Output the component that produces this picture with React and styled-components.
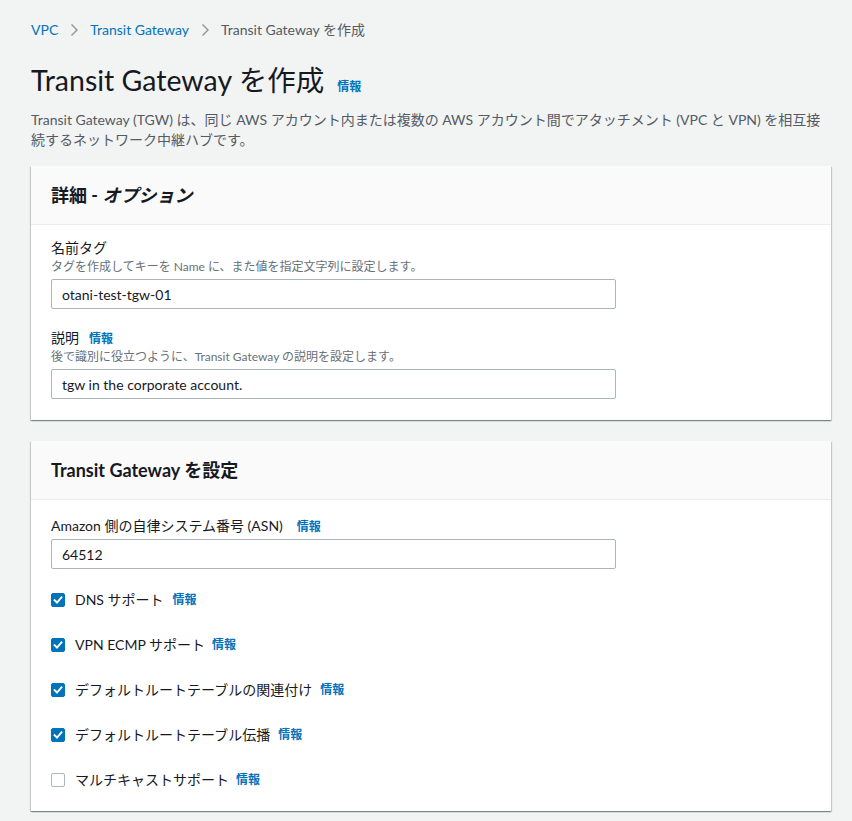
import React from "react";
import styled, { createGlobalStyle } from "styled-components";

const Global = createGlobalStyle`
  html, body { margin: 0; padding: 0; background: #f2f3f3; }
  body {
    font-family: Lato, "Noto Sans CJK JP", sans-serif;
    color: #16191f;
    -webkit-font-smoothing: antialiased;
  }
`;

const Page = styled.div`
  padding: 20px 21px 12px 31px;
  width: 800px;
`;

const Crumbs = styled.nav`
  display: flex;
  align-items: center;
  gap: 11px;
  font-size: 14px;
  line-height: 20px;
  height: 20px;
`;

const CrumbLink = styled.a`
  color: #0073bb;
  text-decoration: none;
`;

const CrumbCurrent = styled.span`
  color: #545b64;
`;

const Chevron = () => (
  <svg width="10" height="14" viewBox="0 0 10 14" fill="none">
    <path d="M2.5 1.5 L8 7 L2.5 12.5" stroke="#879596" strokeWidth="1.4" />
  </svg>
);

const TitleRow = styled.div`
  display: flex;
  align-items: baseline;
  gap: 13px;
  margin-top: 20px;
`;

const Title = styled.h1`
  margin: 0;
  font-size: 28.5px;
  line-height: 40px;
  font-weight: 400;
  color: #16191f;
`;

const Info = styled.a`
  color: #0073bb;
  font-size: 12px;
  font-weight: 700;
  text-decoration: none;
  line-height: 16px;
`;

const Lead = styled.p`
  margin: 10px 0 0;
  font-size: 14px;
  line-height: 20px;
  color: #545b64;
`;

const Card = styled.section`
  background: #fff;
  margin-top: ${(p) => p.$top}px;
  box-shadow: 0 1px 1px 0 rgba(0, 28, 36, 0.3),
    1px 1px 1px 0 rgba(0, 28, 36, 0.15),
    -1px 1px 1px 0 rgba(0, 28, 36, 0.15);
`;

const CardHeader = styled.header`
  background: #fafafa;
  border-bottom: 1px solid #eaeded;
  padding: 19px 20px;
`;

const CardTitle = styled.h2`
  margin: 0;
  font-size: 18px;
  line-height: 20px;
  font-weight: 700;
  color: #16191f;
  em { font-style: italic; }
`;

const CardBody = styled.div`
  padding: ${(p) => p.$pt}px 20px 21px;
  display: flex;
  flex-direction: column;
  gap: ${(p) => p.$gap}px;
`;

const Field = styled.div`
  display: flex;
  flex-direction: column;
`;

const Label = styled.div`
  display: flex;
  align-items: baseline;
  gap: ${(p) => p.$gap || 10}px;
  font-size: 14px;
  line-height: 20px;
  color: #16191f;
`;

const Desc = styled.div`
  margin-top: 1px;
  font-size: 12px;
  line-height: 16px;
  color: #687078;
`;

const Input = styled.input`
  box-sizing: border-box;
  width: 565px;
  height: 30px;
  margin-top: ${(p) => p.$mt}px;
  padding: 4px 10px;
  border: 1px solid #aab7b8;
  border-radius: 2px;
  font-family: inherit;
  font-size: 14px;
  color: #16191f;
  background: #fff;
  outline: none;
`;

const Checks = styled.div`
  display: flex;
  flex-direction: column;
  gap: 25px;
  margin-top: 21px;
`;

const CheckRow = styled.label`
  display: flex;
  align-items: center;
  height: 20px;
  font-size: 14px;
  line-height: 20px;
`;

const Box = styled.span`
  box-sizing: border-box;
  width: 14px;
  height: 14px;
  border-radius: 2px;
  margin-right: 10px;
  display: inline-flex;
  align-items: center;
  justify-content: center;
  background: ${(p) => (p.$on ? "#0073bb" : "#fff")};
  border: 1px solid ${(p) => (p.$on ? "#0073bb" : "#aab7b8")};
`;

const CheckText = styled.span`
  margin-right: ${(p) => p.$gap}px;
`;

const Tick = () => (
  <svg width="10" height="10" viewBox="0 0 10 10" fill="none">
    <path d="M1.6 5.2 L4 7.5 L8.5 2.3" stroke="#fff" strokeWidth="1.9" strokeLinecap="square" />
  </svg>
);

const checks = [
  { text: "DNS サポート", on: true, gap: 9 },
  { text: "VPN ECMP サポート", on: true, gap: 7 },
  { text: "デフォルトルートテーブルの関連付け", on: true, gap: 8 },
  { text: "デフォルトルートテーブル伝播", on: true, gap: 8 },
  { text: "マルチキャストサポート", on: false, gap: 7 },
];

export default function App() {
  return (
    <>
      <Global />
      <Page>
        <Crumbs>
          <CrumbLink href="#">VPC</CrumbLink>
          <Chevron />
          <CrumbLink href="#">Transit Gateway</CrumbLink>
          <Chevron />
          <CrumbCurrent>Transit Gateway を作成</CrumbCurrent>
        </Crumbs>
        <TitleRow>
          <Title>Transit Gateway を作成</Title>
          <Info href="#">情報</Info>
        </TitleRow>
        <Lead>
          Transit Gateway (TGW) は、同じ AWS アカウント内または複数の AWS アカウント間でアタッチメント (VPC と VPN) を相互接続するネットワーク中継ハブです。
        </Lead>

        <Card $top={16}>
          <CardHeader>
            <CardTitle>
              詳細 - <em>オプション</em>
            </CardTitle>
          </CardHeader>
          <CardBody $pt={13} $gap={19}>
            <Field>
              <Label>名前タグ</Label>
              <Desc>タグを作成してキーを Name に、また値を指定文字列に設定します。</Desc>
              <Input $mt={4} defaultValue="otani-test-tgw-01" />
            </Field>
            <Field>
              <Label>
                説明 <Info href="#">情報</Info>
              </Label>
              <Desc>後で識別に役立つように、Transit Gateway の説明を設定します。</Desc>
              <Input $mt={4} defaultValue="tgw in the corporate account." />
            </Field>
          </CardBody>
        </Card>

        <Card $top={21}>
          <CardHeader>
            <CardTitle>Transit Gateway を設定</CardTitle>
          </CardHeader>
          <CardBody $pt={16} $gap={0}>
            <Field>
              <Label $gap={14}>
                Amazon 側の自律システム番号 (ASN) <Info href="#">情報</Info>
              </Label>
              <Input $mt={3} defaultValue="64512" />
            </Field>
            <Checks>
              {checks.map((c) => (
                <CheckRow key={c.text}>
                  <Box $on={c.on}>{c.on && <Tick />}</Box>
                  <CheckText $gap={c.gap}>{c.text}</CheckText>
                  <Info href="#">情報</Info>
                </CheckRow>
              ))}
            </Checks>
          </CardBody>
        </Card>
      </Page>
    </>
  );
}
